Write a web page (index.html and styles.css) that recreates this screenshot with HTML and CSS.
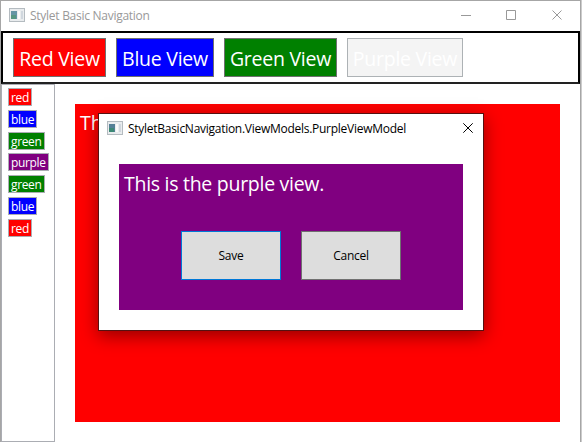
FILE: index.html
```
<!DOCTYPE html>
<html lang="en">
<head>
<meta charset="utf-8">
<title>Stylet Basic Navigation</title>
<link rel="stylesheet" href="styles.css">
</head>
<body>
<div class="window">
  <header class="titlebar">
    <svg class="app-icon" width="16" height="14" viewBox="0 0 16 14"><rect x=".5" y=".5" width="15" height="13" fill="#e9ecee" stroke="#b4bbc0"/><rect x="2" y="3" width="6" height="8" fill="#6495a5"/><rect x="2" y="7" width="5" height="4" fill="#559681"/><rect x="9" y="3" width="2" height="8" fill="#fafafa"/><rect x="12" y="3" width="2" height="8" fill="#d0d7de"/></svg>
    <span class="title">Stylet Basic Navigation</span>
    <svg class="controls" width="105" height="10" viewBox="0 0 105 10" fill="none" stroke="#999"><path d="M0 5.5H10M45.500 .5h9v9h-9zM91.500 .5l9 9M100.500 .5l-9 9"/></svg>
  </header>
  <nav class="toolbar">
    <button class="view red w-red">Red View</button>
    <button class="view blue w-blue">Blue View</button>
    <button class="view green w-green">Green View</button>
    <button class="view disabled" disabled>Purple View</button>
  </nav>
  <div class="body">
    <aside class="history">
      <div class="item red">red</div>
      <div class="item blue">blue</div>
      <div class="item green">green</div>
      <div class="item purple">purple</div>
      <div class="item green">green</div>
      <div class="item blue">blue</div>
      <div class="item red">red</div>
    </aside>
    <main class="content red">This is the red view.</main>
  </div>
</div>
<section class="dialog">
  <header class="dialog-bar">
    <svg class="app-icon" width="16" height="14" viewBox="0 0 16 14"><rect x=".5" y=".5" width="15" height="13" fill="#e9ecee" stroke="#b4bbc0"/><rect x="2" y="3" width="6" height="8" fill="#547f96"/><rect x="2" y="7" width="5" height="4" fill="#3c8975"/><rect x="9" y="3" width="2" height="8" fill="#fafafa"/><rect x="12" y="3" width="2" height="8" fill="#d0d7de"/></svg>
    <span class="title">StyletBasicNavigation.ViewModels.PurpleViewModel</span>
    <svg class="close" width="10" height="10" viewBox="0 0 10 10" fill="none" stroke="#000"><path d="M.3 .3l9.400 9.400M9.700 .3l-9.400 9.400"/></svg>
  </header>
  <div class="panel purple">
    <p class="message">This is the purple view.</p>
    <div class="actions">
      <button class="action save">Save</button>
      <button class="action">Cancel</button>
    </div>
  </div>
</section>
</body>
</html>
```
FILE: styles.css
```
* { box-sizing: border-box; }
body {
  margin: 0;
  width: 582px;
  height: 442px;
  overflow: hidden;
  background: #ccc;
  font: 12px/16px "Open Sans", "Noto Sans", sans-serif;
}
button { font: inherit; padding: 0; margin: 0; white-space: nowrap; }
.red { background: #f00; }
.blue { background: #00f; }
.green { background: #008000; }
.purple { background: #800080; }

.window {
  width: 581px;
  height: 442px;
  background: #fff;
  border: 1px solid #a6a6a6;
  border-bottom: 0;
  display: flex;
  flex-direction: column;
}
.titlebar {
  height: 30px;
  flex: none;
  display: flex;
  align-items: center;
  padding: 0 14px 2px 8px;
  color: #999;
}
.app-icon { flex: none; }
.title { margin-left: 5px; letter-spacing: -0.27px; white-space: nowrap; padding-top: 1px; }
.controls { margin-left: auto; }
.toolbar {
  height: 53px;
  flex: none;
  display: flex;
  gap: 10px;
  padding: 5px 10px;
  border: 2px solid #000;
  border-bottom-color: #222;
}
.view {
  height: 39px;
  border: 1px solid #707070;
  color: #fff;
  font-size: 19.5px;
  line-height: 35px;
  padding-top: 2px;
  letter-spacing: -0.25px;
}
.w-red { width: 93px; }
.w-blue { width: 98px; }
.w-green { width: 113px; }
.disabled { width: 116px; background: #f4f4f4; border-color: #adb2b5; }
.body { flex: 1; display: flex; min-height: 0; }
.history {
  width: 54px;
  border: 1px solid #abadb3;
  padding: 3px 0 0 6px;
  display: flex;
  flex-direction: column;
  align-items: flex-start;
  gap: 3.800px;
}
.item {
  height: 18px;
  flex: none;
  border: 1px solid #abadb3;
  color: #fff;
  padding: 0 2px;
  line-height: 17px;
  letter-spacing: -0.35px;
}
.content {
  margin: 20px;
  flex: 1;
  color: #fff;
  font-size: 19.5px;
  line-height: 26px;
  padding: 6px 5px;
}

.dialog {
  position: absolute;
  left: 98px;
  top: 113px;
  width: 386px;
  height: 218px;
  background: #fff;
  border: 1px solid #511;
  box-shadow: 0 5px 17px rgba(0, 0, 0, .42);
}
.dialog-bar {
  height: 30px;
  display: flex;
  align-items: center;
  padding: 0 10px 2px 8px;
}
.close { margin-left: auto; }
.panel {
  height: 146px;
  margin: 20px 20px 0;
  padding-top: 7px;
}
.message { margin: 0 5px; color: #fff; font-size: 19.5px; line-height: 26px; letter-spacing: -0.28px; }
.actions { display: flex; justify-content: center; gap: 20px; margin-top: 34px; }
.action { width: 100px; height: 49px; background: #ddd; border: 1px solid #707070; color: #000; letter-spacing: -0.25px; }
.save { border-color: #0078d7; }
```
